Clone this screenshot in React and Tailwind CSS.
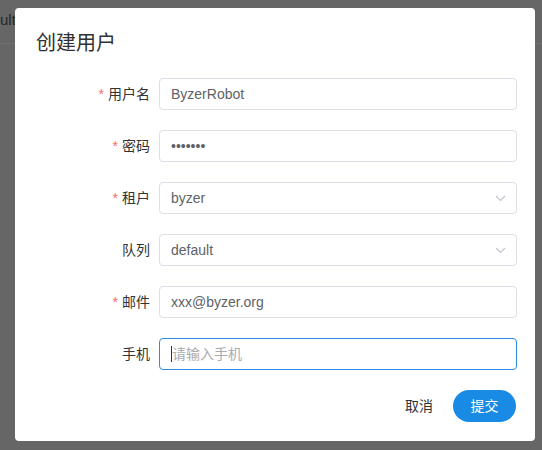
import React from "react";

const fields = [
    { label: "用户名", required: true, value: "ByzerRobot" },
    { label: "密码", required: true, value: "•••••••" },
    { label: "租户", required: true, value: "byzer", select: true },
    { label: "队列", required: false, value: "default", select: true },
    { label: "邮件", required: true, value: "xxx@byzer.org" },
    { label: "手机", required: false, placeholder: "请输入手机", focused: true },
];

function Chevron() {
    return (
        <svg width="11" height="7" viewBox="0 0 11 7" className="ml-auto">
            <path d="M1 1 L5.5 5.5 L10 1" fill="none" stroke="#c0c4cc" strokeWidth="1.2" />
        </svg>
    );
}

function Field({ field }) {
    return (
        <div className="flex items-center h-[32px] mb-[20px]">
            <div className="w-[144px] pr-[9px] flex justify-end items-center text-[14px] text-[#333333]">
                {field.required && <span className="text-[#f56c6c] mr-[4px]">*</span>}
                <span>{field.label}</span>
            </div>
            <div
                className={
                    "flex-1 mr-[18px] h-[32px] rounded-[4px] bg-white flex items-center pl-[11px] pr-[10px] text-[14px] border " +
                    (field.focused ? "border-[#2a8de5]" : "border-[#dcdfe6]")
                }
            >
                {field.focused ? (
                    <>
                        <span className="w-px h-[16px] bg-[#333333]" />
                        <span className="text-[#a8abb2]">{field.placeholder}</span>
                    </>
                ) : (
                    <span className="text-[#606266]">{field.value}</span>
                )}
                {field.select && <Chevron />}
            </div>
        </div>
    );
}

export default function App() {
    return (
        <div className="relative h-[450px] w-full overflow-hidden bg-[#666666] font-['Liberation_Sans','Noto_Sans_CJK_SC',sans-serif]">
            <div className="h-[44px] border-b border-[#727272] flex items-center text-[15px] text-[#262626]">
                <span className="-mt-[2px]">ult</span>
            </div>

            <div className="absolute left-[15px] top-[8px] w-[520px] h-[433px] rounded-[4px] bg-white">
                <div className="pt-[21px] pl-[21px] h-[70px]">
                    <h2 className="text-[20px] leading-[28px] text-[#303133]">创建用户</h2>
                </div>

                <div>
                    {fields.map((f) => (
                        <Field key={f.label} field={f} />
                    ))}
                </div>

                <div className="flex justify-end items-center gap-[20px] mr-[19px]">
                    <button className="text-[14px] text-[#303133] h-[32px]">取消</button>
                    <button className="h-[32px] w-[63px] rounded-full bg-[#1a8be5] text-white text-[14px]">
                        提交
                    </button>
                </div>
            </div>
        </div>
    );
}
